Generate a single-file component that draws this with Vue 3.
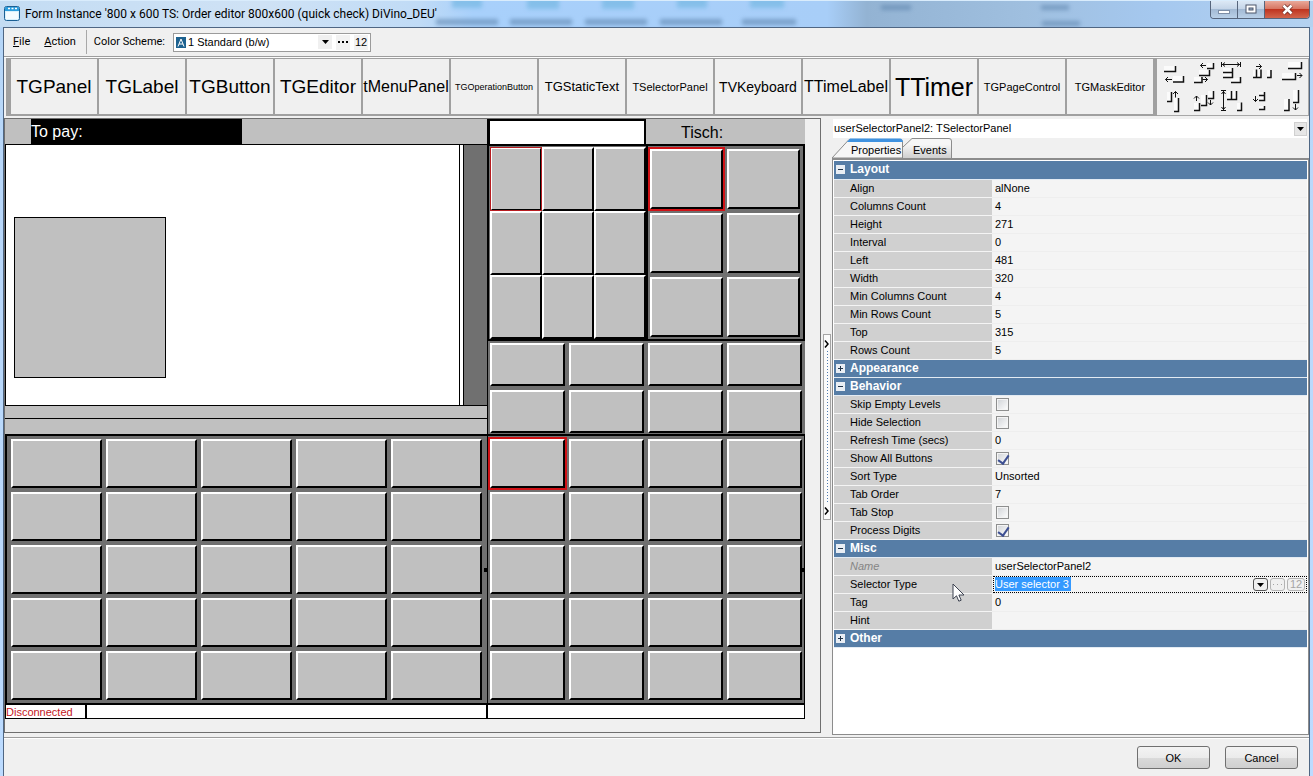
<script setup>
import { ref } from 'vue'

const palette = [
  { name: 'TGPanel', size: 's19' },
  { name: 'TGLabel', size: 's19' },
  { name: 'TGButton', size: 's19' },
  { name: 'TGEditor', size: 's19' },
  { name: 'tMenuPanel', size: 's16' },
  { name: 'TGOperationButton', size: 's9' },
  { name: 'TGStaticText', size: 's13' },
  { name: 'TSelectorPanel', size: 's11' },
  { name: 'TVKeyboard', size: 's14' },
  { name: 'TTimeLabel', size: 's16' },
  { name: 'TTimer', size: 's25' },
  { name: 'TGPageControl', size: 's11' },
  { name: 'TGMaskEditor', size: 's11' },
]

const alignTools = [
  {
    name: 'Align left',
    body: 'M4 7h11v5H4zM13 17h10v6H13z',
    edge: 'M4 12.5H15.5V7M13 23H23.5V17',
    arrow: 'M12 20.5H5.5M8 18l-2.500 2.500L8 23',
  },
  {
    name: 'Swap horizontally',
    body: 'M18 4h6v5h-6zM10 11h10v5H10zM5 18h7v5H5z',
    edge: 'M18 9.500H24.500V4M10 16.500H20.500V11M5 23.500H13V18',
    arrow: 'M17 6.500H11.500M14 4l-2.500 2.500L14 9M13.500 20.500H18.500M16 18l2.500 2.500L16 23',
  },
  {
    name: 'Same width',
    body: 'M5 9h9v9H5zM13 19h9v4H13z',
    edge: 'M5 13.500H14.500M5 18.500H14.500V9M13 23.500H22.500V18',
    arrow: 'M4 5.500H22.500M3.500 3v5M22.500 3v5M7 3.500l-2.500 2L7 7.500M19 3.500l2.500 2-2.500 2',
  },
  {
    name: 'Space horizontally',
    body: 'M6 11h7v7H6zM20 11h3v7h-3z',
    edge: 'M6 18.500H14V10.500M9.500 18V10.500M20 18.500H24V11',
    arrow: 'M9 7.500H14.500M12 5l2.500 2.500L12 10',
  },
  {
    name: 'Align right',
    body: 'M12 3h13v6H12zM6 14h13v6H6z',
    edge: 'M12 9.500H25.500V3M6 20.500H19.500V14',
    arrow: 'M21 16.500H26M23.500 14l2.500 2.500-2.500 2.500',
  },
  {
    name: 'Align top',
    body: 'M7 5h4v9H7zM14 11h4v13h-4z',
    edge: 'M7 14.500H11.500V5M14 24.500H18.500V11',
    arrow: 'M15.500 10.500V4.500M13 7l2.500-2.500L18 7',
  },
  {
    name: 'Swap vertically',
    body: 'M5 16h5v7H5zM12 8h5v10h-5zM19 4h5v7h-5z',
    edge: 'M5 23.500H10.500V16M12 18.500H17.500V8M19 11.500H24.500V4',
    arrow: 'M7.500 14V9M5 11.500L7.500 9l2.500 2.500M21.500 13V18M19 15.500l2.500 2.500 2.500-2.500',
  },
  {
    name: 'Same height',
    body: 'M9 4h9v8H9zM19 16h4v7h-4z',
    edge: 'M9 12.500H18.500V4M13.500 12.500V4M19 23.500H23.500V15.500',
    arrow: 'M5.500 4V23M3 3.500h5M3 23.500h5M3.500 7l2-2.500 2 2.500M3.500 20l2 2.500 2-2.500',
  },
  {
    name: 'Space vertically',
    body: 'M12 5h5v8h-5zM12 19h5v3h-5z',
    edge: 'M12 8.500H17.500M12 13.500H17.500V5M12 22.500H17.500V19',
    arrow: 'M8.500 9V14.500M6 12l2.500 2.500L11 12',
  },
  {
    name: 'Align bottom',
    body: 'M8 12h5v11H8zM17 3h5v12h-5z',
    edge: 'M8 23.500H13V12M17 15.500H22.500V3',
    arrow: 'M19.500 17V23M17 20.500l2.500 2.500 2.500-2.500',
  },
]

const groups = ref([
  {
    name: 'Layout',
    open: true,
    rows: [
      { label: 'Align', value: 'alNone' },
      { label: 'Columns Count', value: '4' },
      { label: 'Height', value: '271' },
      { label: 'Interval', value: '0' },
      { label: 'Left', value: '481' },
      { label: 'Width', value: '320' },
      { label: 'Min Columns Count', value: '4' },
      { label: 'Min Rows Count', value: '5' },
      { label: 'Top', value: '315' },
      { label: 'Rows Count', value: '5' },
    ],
  },
  { name: 'Appearance', open: false, rows: [] },
  {
    name: 'Behavior',
    open: true,
    rows: [
      { label: 'Skip Empty Levels', check: true, value: false },
      { label: 'Hide Selection', check: true, value: false },
      { label: 'Refresh Time (secs)', value: '0' },
      { label: 'Show All Buttons', check: true, value: true },
      { label: 'Sort Type', value: 'Unsorted' },
      { label: 'Tab Order', value: '7' },
      { label: 'Tab Stop', check: true, value: false },
      { label: 'Process Digits', check: true, value: true },
    ],
  },
  {
    name: 'Misc',
    open: true,
    rows: [
      { label: 'Name', value: 'userSelectorPanel2', dim: true },
      { label: 'Selector Type', value: 'User selector 3', editing: true },
      { label: 'Tag', value: '0' },
      { label: 'Hint', value: '' },
    ],
  },
  { name: 'Other', open: false, rows: [] },
])

const idOf = (label) => 'prop-' + label.toLowerCase().replace(/[^a-z]+/g, '-')
</script>

<template>
  <div class="window">
    <header class="titlebar">
      <svg class="glass" width="1313" height="27" aria-hidden="true">
        <g class="smudge-icons">
          <rect x="452" y="-4" width="30" height="11" /><rect x="527" y="-4" width="32" height="12" />
          <rect x="602" y="-4" width="32" height="12" /><rect x="677" y="-4" width="30" height="11" />
          <rect x="750" y="-4" width="34" height="11" />
        </g>
        <g class="smudge-text">
          <rect x="436" y="18" width="62" height="6" /><rect x="510" y="18" width="62" height="6" />
          <rect x="585" y="18" width="62" height="6" /><rect x="660" y="18" width="62" height="6" />
          <rect x="742" y="18" width="54" height="6" /><rect x="881" y="4" width="30" height="5" />
          <rect x="1041" y="4" width="28" height="5" /><rect x="1042" y="20" width="38" height="5" />
        </g>
      </svg>
      <svg class="app-icon" width="16" height="16" viewBox="0 0 16 16" aria-hidden="true">
        <rect x="0.500" y="0.500" width="15" height="14" rx="2" fill="#d8f0fc" stroke="#1b5f93" />
        <path d="M1 2q0-1 1-1h12q1 0 1 1v3H1z" fill="#2b9ddd" />
        <path d="M4 2.500h2M7.500 2.500h2M11 2.500h2" stroke="#fff" stroke-width="1.500" />
        <path d="M2 6h12v7H2z" fill="#f4fbff" />
      </svg>
      <h1>Form Instance '800 x 600 TS: Order editor 800x600 (quick check) DiVino_DEU'</h1>
      <div class="win-buttons">
        <button class="min" aria-label="Minimize">
          <svg width="12" height="12"><rect x="0.500" y="6.500" width="11" height="3" fill="#fff" stroke="#7d8ea6" /></svg>
        </button>
        <button class="max" aria-label="Maximize">
          <svg width="12" height="11"><rect x="1" y="1" width="10" height="8" fill="#fff" stroke="#4c566b" /><rect x="4" y="4" width="4" height="2" fill="#9fb6d0" stroke="#4c566b" /></svg>
        </button>
        <button class="close" aria-label="Close">
          <svg width="13" height="11"><path d="M2.500 1.500l8 8M10.500 1.500l-8 8" stroke="#6c2a25" stroke-width="4" /><path d="M2.500 1.500l8 8M10.500 1.500l-8 8" stroke="#fff" stroke-width="2.500" /></svg>
        </button>
      </div>
    </header>

    <div class="client">
      <nav class="menubar">
        <button class="menu"><u>F</u>ile</button>
        <button class="menu"><u>A</u>ction</button>
        <label class="scheme-label" for="scheme">Color Scheme:</label>
        <div class="scheme">
          <svg width="10" height="11" aria-hidden="true"><rect width="10" height="11" fill="#1d6290" /><path d="M2 9.500L5 2l3 7.500M3 7h4" fill="none" stroke="#fff" /></svg>
          <select id="scheme"><option>1 Standard (b/w)</option></select>
          <svg class="arrow" width="14" height="14" aria-hidden="true"><path d="M4 5h7L7.500 9z" /></svg>
          <button aria-label="Browse"><svg width="13" height="14"><path d="M1 6h2v2H1zM5 6h2v2H5zM9 6h2v2H9z" /></svg></button>
          <button>12</button>
        </div>
      </nav>

      <div class="toolbar">
        <div class="palette">
          <button v-for="p in palette" :key="p.name" :class="p.size">{{ p.name }}</button>
        </div>
        <div class="align-tools">
          <button v-for="t in alignTools" :key="t.name" :aria-label="t.name">
            <svg width="29" height="29" viewBox="0 0 29 29">
              <path :d="t.body" fill="#fbfbfb" />
              <path :d="t.edge" fill="none" stroke="#111" stroke-width="1.500" />
              <path :d="t.arrow" fill="none" stroke="#111" />
            </svg>
          </button>
        </div>
      </div>

      <main class="main">
        <section class="designer">
          <div class="form">
            <div class="left">
              <div class="pay"><span>To pay:</span></div>
              <div class="list">
                <div class="sheet"><div class="box"></div></div>
                <div class="gutter"></div>
                <div class="scroll"></div>
              </div>
              <div class="strip one"></div>
              <div class="strip two"></div>
              <div class="pad pad-left">
                <button v-for="n in 25" :key="n" class="cell" :aria-label="'Item ' + n"></button>
              </div>
            </div>
            <div class="right">
              <div class="table-head">
                <div class="field"></div>
                <span>Tisch:</span>
              </div>
              <div class="uppers">
                <div class="pad pad-digits">
                  <button v-for="n in 9" :key="n" class="cell" :class="{ 'focus-thin': n === 1 }" :aria-label="'Digit ' + n"></button>
                </div>
                <div class="pad pad-tables">
                  <button v-for="n in 6" :key="n" class="cell" :class="{ focus: n === 1 }" :aria-label="'Table ' + n"></button>
                </div>
              </div>
              <div class="pad pad-mid">
                <button v-for="n in 8" :key="n" class="cell" :aria-label="'Group ' + n"></button>
              </div>
              <div class="pad pad-right">
                <button v-for="n in 20" :key="n" class="cell" :class="{ focus: n === 1 }" :aria-label="'Selector ' + n"></button>
                <i class="handle west"></i>
                <i class="handle east"></i>
              </div>
            </div>
            <div class="status">
              <span class="state">Disconnected</span>
              <span class="mid"></span>
              <span class="end"></span>
            </div>
          </div>
        </section>

        <div class="splitter">
          <button aria-label="Toggle inspector">
            <svg width="6" height="10"><path d="M1 1.500l3 3.500-3 3.500" /></svg>
            <i></i>
            <svg width="6" height="10"><path d="M1 1.500l3 3.500-3 3.500" /></svg>
          </button>
        </div>

        <aside class="inspector">
          <div class="object">
            <select aria-label="Object"><option>userSelectorPanel2: TSelectorPanel</option></select>
            <svg class="arrow" width="13" height="14" aria-hidden="true"><rect x="0.500" y="0.500" width="12" height="13" fill="#e6e6e6" stroke="#d0d0d0" /><path d="M3 5h7L6.500 9z" /></svg>
          </div>
          <div class="tabs">
            <button class="tab active">
              <svg width="71" height="20" aria-hidden="true"><path d="M0 20L17 1.500H68q2.500 0 2.500 2.500V20z" fill="#f6f6f6" stroke="#8c8c8c" /><path d="M15 4l3-3.500h50q2.500 0 3 3.500z" fill="#3f92e0" /></svg>
              <span>Properties</span>
            </button>
            <button class="tab">
              <svg width="49" height="20" aria-hidden="true"><defs><linearGradient id="tabfill" x2="0" y2="1"><stop offset="0.300" stop-color="#f6f6f6" /><stop offset="1" stop-color="#cfcfcf" /></linearGradient></defs><path d="M0 9L9 0.500H46q2.500 0 2.500 2.500V20H0z" fill="url(#tabfill)" /><path d="M0 9L9 0.500H46q2.500 0 2.500 2.500V20" fill="none" stroke="#8c8c8c" /></svg>
              <span>Events</span>
            </button>
          </div>
          <div class="grid">
            <table>
              <colgroup><col class="c1" /><col /></colgroup>
              <tbody v-for="g in groups" :key="g.name">
                <tr class="group">
                  <th colspan="2" scope="colgroup">
                    <button :aria-expanded="g.open">
                      <svg width="9" height="9" aria-hidden="true"><rect width="9" height="9" fill="#e9eef4" /><path :d="g.open ? 'M2 4.500h5' : 'M2 4.500h5M4.500 2v5'" stroke="#1f3348" /></svg>{{ g.name }}
                    </button>
                  </th>
                </tr>
                <tr v-for="r in g.rows" :key="r.label">
                  <th scope="row" :class="{ dim: r.dim }">
                    <label v-if="r.check || r.editing" :for="idOf(r.label)">{{ r.label }}</label>
                    <template v-else>{{ r.label }}</template>
                  </th>
                  <td>
                    <input v-if="r.check" :id="idOf(r.label)" v-model="r.value" type="checkbox" />
                    <div v-else-if="r.editing" class="edit">
                      <input :id="idOf(r.label)" v-model="r.value" type="text" />
                      <button class="drop" aria-label="Open list"><svg width="13" height="11"><path d="M3 4h7L6.500 8z" /></svg></button>
                      <button class="off" disabled aria-label="Browse"><svg width="11" height="11"><path d="M1 5h1v1H1zM5 5h1v1H5zM9 5h1v1H9z" /></svg></button>
                      <button class="off num" disabled>12</button>
                    </div>
                    <template v-else>{{ r.value }}</template>
                  </td>
                </tr>
              </tbody>
            </table>
            <svg class="cursor" width="13" height="20" viewBox="0 0 13 20" aria-hidden="true"><path d="M1 1v15l3.500-3.200 2.300 5.400 2.400-1-2.300-5.200H12z" fill="#fff" stroke="#3c4250" /></svg>
          </div>
        </aside>
      </main>

      <footer class="footer">
        <button>OK</button>
        <button>Cancel</button>
      </footer>
    </div>
  </div>
</template>

<style>
body { overflow: hidden; }
</style>

<style scoped>
* { box-sizing: border-box; }
button, input, select { font: inherit; color: inherit; margin: 0; padding: 0; border: 0; border-radius: 0; background: none; }
svg { display: block; flex: none; }

.window {
  display: flex;
  flex-direction: column;
  height: 100vh;
  padding: 0 3px 0 3px;
  background: linear-gradient(#b4d5f7, #b9d8fa 20%, #bcdbff);
  color: #000;
  font: 11px/14px "Liberation Sans", Arial, sans-serif;
}

/* title bar */
.titlebar {
  position: relative;
  display: flex;
  flex: none;
  align-items: center;
  height: 27px;
  margin: 0 -3px;
  padding-left: 4px;
  overflow: hidden;
  background: linear-gradient(90deg, #c3dcf3, #cfe2f5 20%, #c0dbf6 32%, #a8d0fb 36%, #a8cef8 63%, #93b3d3 66%, #9fbfdf 78%, #a5c8ef 88%, #b4d2f0);
  border-top: 1px solid #d9ecfc;
}
.glass { position: absolute; left: 0; top: 0; }
.smudge-icons { fill: #7dbbe6; opacity: .8; filter: blur(2px); }
.smudge-text { fill: #5c83ac; opacity: .6; filter: blur(2px); }
.app-icon { position: relative; }
h1 { position: relative; flex: 1; margin: 0 0 0 5px; font: 12px/18px Roboto, "Open Sans", sans-serif; white-space: nowrap; }
.win-buttons { position: relative; display: flex; align-self: flex-start; height: 18px; margin-right: 3px; border: 1px solid #56657c; border-top: 0; border-radius: 0 0 4px 4px; overflow: hidden; }
.win-buttons button { display: grid; place-items: center; width: 27px; border-right: 1px solid #56657c; background: linear-gradient(#dce8f5, #c5d5e8 45%, #a3bad4 50%, #b9d0e8); }
.win-buttons .close { width: 44px; border: 0; background: linear-gradient(#e9a99a, #d77663 45%, #bf3520 50%, #d2654c); }

.client { display: flex; flex: 1; flex-direction: column; min-height: 0; background: #f0f0f0; border: 1px solid #4f6683; border-width: 1px 1px 0; }

/* menu */
.menubar { display: flex; flex: none; align-items: center; height: 28px; padding-left: 9px; }
.menu, .scheme-label { font: 11px/16px Roboto, "Open Sans", sans-serif; }
.menu { margin-right: 14px; }
.scheme-label { padding: 4px 8px 4px 7px; margin-left: -4px; border-left: 1px solid #a8a8a8; }
.scheme { display: flex; align-items: center; width: 198px; height: 19px; padding: 0 2px; gap: 2px; background: #fff; border: 1px solid #9b9b9b; }
.scheme select { flex: 1; min-width: 0; height: 17px; appearance: none; }
.scheme .arrow { background: #f0f0f0; }
.scheme button { height: 15px; min-width: 14px; margin-left: 2px; background: #f2f2f2; }
.scheme button svg { margin: auto; }

/* component toolbar */
.toolbar { display: flex; flex: none; height: 62px; padding: 1px 0 0 2px; border-top: 1px solid #9d9d9d; box-shadow: inset 0 1px #fcfcfc; }
.palette { display: flex; height: 58px; border: solid #a0a0a0; border-width: 1px 4px 2px 5px; }
.palette button { width: 88px; overflow: hidden; border-right: 2px solid #a0a0a0; text-align: center; white-space: nowrap; }
.palette button:last-child { width: 86px; border: 0; }
.s9 { font-size: 9px; }
.s11 { font-size: 11px; }
.s13 { font-size: 13px; }
.s14 { font-size: 14px; }
.s16 { font-size: 16px; }
.s19 { font-size: 19px; }
.s25 { font-size: 25px; }
.align-tools { display: grid; flex: 1; grid-template-columns: repeat(5, 29px); align-content: start; height: 58px; padding-left: 3px; border: solid #a8a8a8; border-width: 1px 1px 1px 0; }
.align-tools button { height: 28px; }

/* form designer */
.main { display: flex; flex: 1; min-height: 0; }
.designer { flex: none; width: 817px; height: 615px; border: 1px solid #6f6f6f; }
.form { display: grid; grid-template-columns: 482px 318px; width: 800px; background: #707070; }
.pay { height: 26px; padding-left: 26px; background: #c0c0c0; border-bottom: 1px solid #000; }
.pay span { display: block; width: 211px; height: 25px; background: #000; color: #fff; font-size: 16px; line-height: 25px; }
.list { display: flex; height: 261px; border: solid #000; border-width: 0 0 1px 1px; background: #fff; }
.sheet { flex: 1; padding: 72px 8px; }
.box { width: 152px; height: 161px; background: #c0c0c0; border: 1px solid #000; }
.gutter { width: 5px; border: solid #000; border-width: 0 1px; }
.scroll { width: 23px; background: #707070; }
.strip { background: #c0c0c0; }
.strip.one { height: 13px; border-bottom: 1px solid #000; }
.strip.two { height: 15px; }

.pad { display: grid; gap: 4px; background: #707070; }
.cell { background: #c0c0c0; border: 2px solid; border-color: #fff #000 #000 #fff; }
.focus { outline: 2px solid #d01216; }
.pad-left { grid-template: repeat(5, 49px) / repeat(5, 91px); padding: 3px 5px 3px 4px; border: solid #000; border-width: 2px 0 2px 2px; }
.right { border-left: 1px solid #000; }
.table-head { display: flex; height: 27px; background: #c0c0c0; border-bottom: 2px solid #000; }
.field { width: 158px; background: #fff; border: 2px solid #000; border-bottom: 0; }
.table-head span { padding-left: 35px; font-size: 16px; line-height: 27px; }
.uppers { display: flex; height: 195px; border-bottom: 2px solid #000; }
.pad-digits { grid-template: repeat(3, 64px) / repeat(3, 52px); gap: 0; padding: 1px 0 0 1px; border-left: 1px solid #000; }
.focus-thin { outline: 1px solid #b81c20; outline-offset: -1px; }
.pad-tables { flex: 1; grid-template: repeat(3, 60px) / repeat(2, 73px); padding: 3px 2px; border: solid #000; border-width: 0 2px; }
.pad-mid { grid-template: repeat(2, 43px) / repeat(4, 75px); padding: 2px 0 1px 2px; }
.pad-right { position: relative; grid-template: repeat(5, 49px) / repeat(4, 75px); padding: 3px 1px 3px 2px; border: solid #000; border-width: 2px 1px 2px 0; }
.handle { position: absolute; top: 132px; width: 3px; height: 4px; background: #000; }
.handle.west { left: -4px; }
.handle.east { right: -1px; }
.status { display: flex; grid-column: 1 / 3; height: 14px; background: #fff; border: solid #000; border-width: 0 1px 1px 1px; }
.status span { border-right: 2px solid #000; }
.state { width: 81px; color: #c4161c; line-height: 14px; }
.mid { flex: 1; }
.status .end { width: 316px; border: 0; }

/* splitter */
.splitter { display: flex; flex: none; align-items: center; width: 11px; padding: 0 1px 0 2px; }
.splitter button { display: flex; flex-direction: column; align-items: center; width: 8px; height: 186px; padding: 4px 0 3px; background: #fbfbfb; border: 1px solid #a5a5a5; }
.splitter path { fill: none; stroke: #000; stroke-width: 1.5; }
.splitter i { flex: 1; width: 1px; margin: 2px 0; background: repeating-linear-gradient(#4f7bb0 0 1px, transparent 1px 3px); }

/* inspector */
.inspector { display: flex; flex: 1; flex-direction: column; min-width: 0; padding-top: 1px; }
.object { position: relative; flex: none; height: 19px; margin: 0 2px 0 1px; background: #fff; }
.object select { width: 100%; height: 18px; padding-left: 1px; appearance: none; }
.object .arrow { position: absolute; right: 0; top: 3px; pointer-events: none; }
.tabs { display: flex; flex: none; height: 20px; }
.tab { position: relative; height: 20px; }
.tab svg { position: relative; }
.tab span { position: absolute; inset: 5px 0 0 10px; text-align: left; }
.tab.active span { left: 19px; }
.grid { position: relative; flex: 1; min-height: 0; padding: 1px; background: #fff; border: 1px solid #8c8c8c; border-top-width: 2px; }
table { width: 100%; table-layout: fixed; border-collapse: collapse; }
.c1 { width: 158px; }
tr { height: 18px; }
th, td { height: 18px; padding: 0; border-bottom: 1px solid #f4f4f4; line-height: 16px; text-align: left; font-weight: normal; white-space: nowrap; }
th { padding-left: 16px; background: #d0d0d0; }
td { padding-left: 3px; background: #f4f4f4; border-color: #eee; }
.dim { color: #858585; font-style: italic; }
.group th { padding: 0; background: #567da6; border-color: #e3ebf3; color: #fff; font-weight: bold; }
.group button { display: flex; gap: 5px; align-items: center; width: 100%; padding-left: 2px; font-size: 12px; line-height: 17px; }
td input[type="checkbox"] { display: block; width: 13px; height: 13px; margin-left: 1px; appearance: none; background: linear-gradient(135deg, #cfd2d6, #fff); border: 1px solid #8e8f8f; box-shadow: inset 0 0 0 1px #f4f4f4; position: relative; }
td input[type="checkbox"]:checked::after { content: ""; position: absolute; left: 3px; top: 0; width: 5px; height: 9px; border: solid #3d4f92; border-width: 0 2px 2px 0; transform: rotate(35deg); }
.edit { display: flex; gap: 2px; align-items: center; height: 17px; margin-left: -2px; padding: 0 1px; border: 1px dotted #000; }
.edit input { width: 76px; height: 14px; margin-right: auto; background: #3399ff; color: #fff; }
.edit button { display: grid; place-items: center; width: 15px; height: 13px; background: #f0f0f0; border: 1px solid #555; border-radius: 3px; line-height: 11px; }
.edit .off { border-color: #b4b4b4; color: #a5a5a5; fill: #a5a5a5; }
.edit .num { width: 18px; }
.cursor { position: absolute; left: 119px; top: 423px; }

/* footer */
.footer { display: flex; flex: none; justify-content: flex-end; gap: 15px; height: 39px; margin-top: 2px; padding: 8px 11px 0 0; border-top: 1px solid #9d9d9d; box-shadow: inset 0 1px #fff; }
.footer button { width: 73px; height: 23px; background: linear-gradient(#f3f3f3, #ebebeb 50%, #dadada 52%, #cfcfcf); border: 1px solid #707070; border-radius: 3px; }
</style>
